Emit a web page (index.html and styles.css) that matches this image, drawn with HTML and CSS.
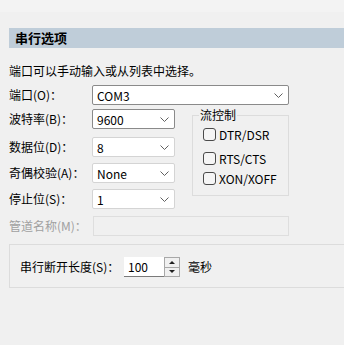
FILE: index.html
```html
<!DOCTYPE html>
<html lang="zh-CN">
<head>
  <meta charset="UTF-8">
  <title>串行选项</title>
  <link rel="stylesheet" href="styles.css">
</head>
<body>

  <div class="top_strip"></div>

  <div class="page">
    <div class="section_title">串行选项</div>
    <p class="hint">端口可以手动输入或从列表中选择。</p>

    <div class="form">
      <label class="lbl row1">端口(O)：</label>
      <div class="combo combo-active combo-wide row1">
        <span>COM3</span>
        <svg class="chev" width="9" height="5" viewBox="0 0 9 5"><path d="M0.5 0.5 L4.5 4.5 L8.5 0.5"/></svg>
      </div>

      <label class="lbl row2">波特率(B)：</label>
      <div class="combo combo-active row2">
        <span>9600</span>
        <svg class="chev" width="9" height="5" viewBox="0 0 9 5"><path d="M0.5 0.5 L4.5 4.5 L8.5 0.5"/></svg>
      </div>

      <label class="lbl row3">数据位(D)：</label>
      <div class="combo row3">
        <span>8</span>
        <svg class="chev" width="9" height="5" viewBox="0 0 9 5"><path d="M0.5 0.5 L4.5 4.5 L8.5 0.5"/></svg>
      </div>

      <label class="lbl row4">奇偶校验(A)：</label>
      <div class="combo row4">
        <span>None</span>
        <svg class="chev" width="9" height="5" viewBox="0 0 9 5"><path d="M0.5 0.5 L4.5 4.5 L8.5 0.5"/></svg>
      </div>

      <label class="lbl row5">停止位(S)：</label>
      <div class="combo row5">
        <span>1</span>
        <svg class="chev" width="9" height="5" viewBox="0 0 9 5"><path d="M0.5 0.5 L4.5 4.5 L8.5 0.5"/></svg>
      </div>

      <div class="flow_group">
        <span class="flow_title">流控制</span>
        <div class="check check1"><span class="box"></span>DTR/DSR</div>
        <div class="check check2"><span class="box"></span>RTS/CTS</div>
        <div class="check check3"><span class="box"></span>XON/XOFF</div>
      </div>

      <label class="lbl lbl-disabled row6">管道名称(M)：</label>
      <div class="pipe_input row6"></div>
    </div>

    <div class="break_group">
      <label class="break_lbl">串行断开长度(S)：</label>
      <div class="spin_input">100</div>
      <div class="spin_btns">
        <div class="spin_half"><span class="tri-up"></span></div>
        <div class="spin_half spin_low"><span class="tri-down"></span></div>
      </div>
      <span class="unit">毫秒</span>
    </div>
  </div>

</body>
</html>
```

FILE: styles.css
```css
body {
  margin: 0;
  background: #f0f0f0;
  font-family: "Noto Sans CJK SC", "Noto Sans", sans-serif;
  font-size: 12px;
  color: #000;
  width: 344px;
  height: 345px;
  overflow: hidden;
}

.top_strip {
  height: 12px;
  background: #f3f3f3;
}

.page {
  padding: 16px 0 0 9px;
}

.section_title {
  height: 20px;
  line-height: 20px;
  background: #bfcdd9;
  padding-left: 6px;
  font-size: 13px;
  font-weight: bold;
  margin-right: -2px;
}

.hint {
  margin: 15px 0 0;
  line-height: 16px;
}

.form {
  display: grid;
  grid-template-columns: 83px 83px 17px 97px;
  grid-template-rows: 24px 28px 26px 26px 27px 20px;
  margin-top: 6px;
}

.lbl {
  grid-column: 1;
  line-height: 20px;
  white-space: nowrap;
}

.lbl-disabled { color: #a0a0a0; }

.row1 { grid-row: 1; }
.row2 { grid-row: 2; }
.row3 { grid-row: 3; }
.row4 { grid-row: 4; }
.row5 { grid-row: 5; }
.row6 { grid-row: 6; }

.combo {
  grid-column: 2;
  box-sizing: border-box;
  height: 20px;
  display: flex;
  align-items: center;
  justify-content: space-between;
  padding: 0 5px 0 4px;
  background: #fff;
  border: 1px solid #d4d4d4;
  border-radius: 2px;
}

.combo-active {
  border-color: #8a8a8a;
}

.combo-wide {
  grid-column: 2 / 5;
}

.chev path {
  fill: none;
  stroke: #606060;
  stroke-width: 1;
}

.flow_group {
  grid-column: 4;
  grid-row: 2 / 6;
  align-self: start;
  margin-top: 6px;
  height: 81px;
  box-sizing: border-box;
  border: 1px solid #dcdcdc;
  position: relative;
}

.flow_title {
  position: absolute;
  left: 6px;
  top: -9px;
  padding: 0 1px;
  line-height: 16px;
  background: #f0f0f0;
}

.check {
  position: absolute;
  left: 10px;
  display: flex;
  align-items: center;
  line-height: 13px;
}

.check1 { top: 12px; }
.check2 { top: 36px; }
.check3 { top: 56px; }

.box {
  width: 13px;
  height: 13px;
  box-sizing: border-box;
  border: 1px solid #4a4a4a;
  border-radius: 3px;
  background: #f5f5f5;
  margin-right: 3px;
}

.pipe_input {
  grid-column: 2 / 5;
  margin-left: 1px;
  height: 20px;
  box-sizing: border-box;
  border: 1px solid #dedede;
  background: #f0f0f0;
}

.break_group {
  margin-top: 8px;
  margin-right: -2px;
  height: 44px;
  box-sizing: border-box;
  border: 1px solid #dcdcdc;
  border-right: none;
  padding: 12px 0 0 10px;
  display: flex;
  align-items: flex-start;
}

.break_lbl {
  width: 104px;
  line-height: 20px;
  white-space: nowrap;
}

.spin_input {
  width: 40px;
  height: 20px;
  box-sizing: border-box;
  background: #fff;
  border-bottom: 1px solid #7a7a7a;
  padding-left: 4px;
  line-height: 19px;
}

.spin_btns {
  width: 16px;
  height: 20px;
  box-sizing: border-box;
  border: 1px solid #a8a8a8;
  background: #f0f0f0;
  display: flex;
  flex-direction: column;
}

.spin_half {
  flex: 1;
  display: flex;
  align-items: center;
  justify-content: center;
}

.spin_low {
  border-top: 1px solid #a8a8a8;
}

.tri-up {
  border-left: 3px solid transparent;
  border-right: 3px solid transparent;
  border-bottom: 3px solid #202020;
}

.tri-down {
  border-left: 3px solid transparent;
  border-right: 3px solid transparent;
  border-top: 3px solid #202020;
}

.unit {
  margin-left: 8px;
  line-height: 20px;
}
```
